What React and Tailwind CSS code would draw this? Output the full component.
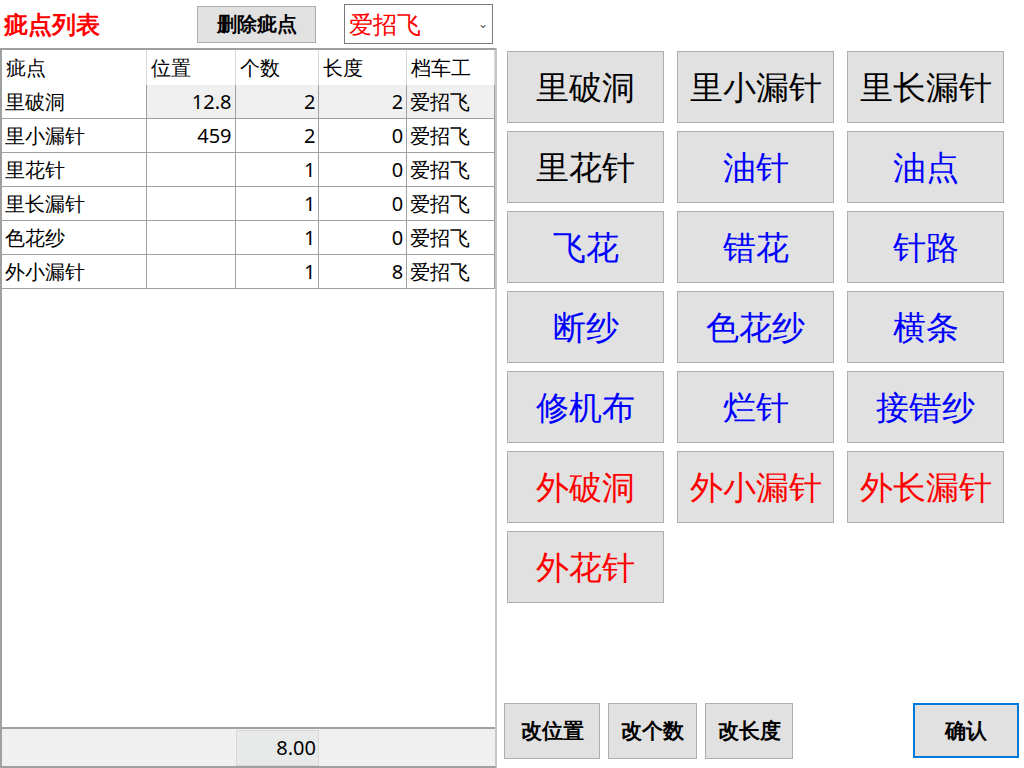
const rows = [
  ['里破洞', '12.8', '2', '2', '爱招飞'],
  ['里小漏针', '459', '2', '0', '爱招飞'],
  ['里花针', '', '1', '0', '爱招飞'],
  ['里长漏针', '', '1', '0', '爱招飞'],
  ['色花纱', '', '1', '0', '爱招飞'],
  ['外小漏针', '', '1', '8', '爱招飞'],
]

const buttons = [
  ['里破洞', 'text-black'], ['里小漏针', 'text-black'], ['里长漏针', 'text-black'],
  ['里花针', 'text-black'], ['油针', 'text-[#0000ff]'], ['油点', 'text-[#0000ff]'],
  ['飞花', 'text-[#0000ff]'], ['错花', 'text-[#0000ff]'], ['针路', 'text-[#0000ff]'],
  ['断纱', 'text-[#0000ff]'], ['色花纱', 'text-[#0000ff]'], ['横条', 'text-[#0000ff]'],
  ['修机布', 'text-[#0000ff]'], ['烂针', 'text-[#0000ff]'], ['接错纱', 'text-[#0000ff]'],
  ['外破洞', 'text-[#ff0000]'], ['外小漏针', 'text-[#ff0000]'], ['外长漏针', 'text-[#ff0000]'],
  ['外花针', 'text-[#ff0000]'],
]

const cols = ['w-[145px]', 'w-[89px]', 'w-[84px]', 'w-[88px]', 'w-[88px]']

export default function App() {
  return (
    <div className="relative h-[768px] w-[1024px] overflow-hidden bg-white font-['Noto_Sans_CJK_SC',sans-serif] text-black">
      <div className="flex h-[48px] items-center">
        <div className="w-[197px] pl-[4px] text-[24px] font-bold text-[#ff0000]">疵点列表</div>
        <button className="h-[37px] w-[119px] border border-[#adadad] bg-[#e1e1e1] text-[20px] font-bold">删除疵点</button>
        <div className="ml-[28px] flex h-[40px] w-[149px] items-center justify-between border border-[#7a7a7a] px-[4px] text-[24px] text-[#ff0000]">
          <span>爱招飞</span>
          <span className="text-[12px] text-[#555]">⌄</span>
        </div>
      </div>
      <div className="flex">
        <div className="flex h-[720px] w-[497px] flex-col border-2 border-[#a0a0a0] border-r-[#c8c8c8]">
          <div className="flex-1">
            <div className="flex h-[35px] text-[20px]">
              {['疵点', '位置', '个数', '长度', '档车工'].map((h, i) => (
                <div key={h} className={`${cols[i]} flex items-center border-r border-[#d8d8d8] pl-[4px]`}>{h}</div>
              ))}
            </div>
            {rows.map((r, ri) => (
              <div key={ri} className={`flex h-[34px] border-b border-[#a0a0a0] text-[20px] ${ri === 0 ? 'bg-[#f0f0f0]' : ''}`}>
                {r.map((c, i) => (
                  <div key={i} className={`${cols[i]} flex items-center border-r border-[#a0a0a0] px-[3px] ${i === 0 || i === 4 ? 'justify-start' : 'justify-end'} ${ri === 0 && i === 0 ? 'bg-white' : ''}`}>{c}</div>
                ))}
              </div>
            ))}
          </div>
          <div className="flex h-[39px] items-center border-t-2 border-[#a0a0a0] bg-[#f0f0f0]">
            <div className="ml-[234px] flex h-[36px] w-[83px] items-center justify-end border border-[#d8d8d8] bg-[#e8eaea] pr-[2px] text-[20px]">8.00</div>
          </div>
        </div>
        <div className="relative flex-1">
          <div className="ml-[10px] mt-[3px] grid w-[498px] grid-cols-[157px_157px_157px] gap-x-[13px] gap-y-[8px]">
            {buttons.map(([t, c]) => (
              <div key={t} className={`flex h-[72px] items-center justify-center border border-[#adadad] bg-[#e1e1e1] text-[33px] ${c}`}>{t}</div>
            ))}
          </div>
          <div className="absolute bottom-[9px] left-[7px] flex gap-[8px] text-[21px] font-bold">
            <div className="flex h-[56px] w-[96px] items-center justify-center border border-[#adadad] bg-[#e1e1e1]">改位置</div>
            <div className="flex h-[56px] w-[89px] items-center justify-center border border-[#adadad] bg-[#e1e1e1]">改个数</div>
            <div className="flex h-[56px] w-[88px] items-center justify-center border border-[#adadad] bg-[#e1e1e1]">改长度</div>
          </div>
          <div className="absolute bottom-[10px] left-[416px] flex h-[55px] w-[106px] items-center justify-center border-2 border-[#0078d7] bg-[#e1e1e1] text-[21px] font-bold">确认</div>
        </div>
      </div>
    </div>
  )
}
